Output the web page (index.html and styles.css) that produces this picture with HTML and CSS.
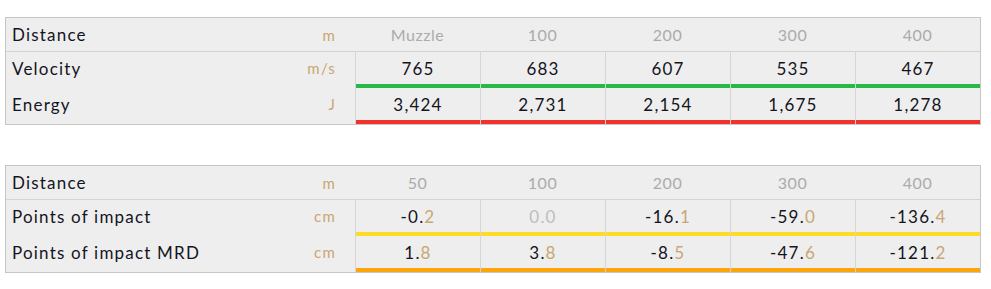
FILE: index.html
```html
<!DOCTYPE html>
<html lang="en">
<head>
<meta charset="utf-8">
<title>Ballistics</title>
<link rel="stylesheet" href="styles.css">
</head>
<body>
<div class="page">
  <table class="ballistics">
    <colgroup><col class="c-label"><col class="c-unit"><col class="c-val"><col class="c-val"><col class="c-val"><col class="c-val"><col class="c-val"></colgroup>
    <tr class="head">
      <th class="label">Distance</th><th class="unit">m</th>
      <td>Muzzle</td><td>100</td><td>200</td><td>300</td><td>400</td>
    </tr>
    <tr class="data green">
      <th class="label">Velocity</th><th class="unit">m/s</th>
      <td>765</td><td>683</td><td>607</td><td>535</td><td>467</td>
    </tr>
    <tr class="data red">
      <th class="label">Energy</th><th class="unit">J</th>
      <td>3,424</td><td>2,731</td><td>2,154</td><td>1,675</td><td>1,278</td>
    </tr>
  </table>

  <table class="ballistics">
    <colgroup><col class="c-label"><col class="c-unit"><col class="c-val"><col class="c-val"><col class="c-val"><col class="c-val"><col class="c-val"></colgroup>
    <tr class="head">
      <th class="label">Distance</th><th class="unit">m</th>
      <td>50</td><td>100</td><td>200</td><td>300</td><td>400</td>
    </tr>
    <tr class="data yellow">
      <th class="label">Points of impact</th><th class="unit">cm</th>
      <td>-0.<span class="dec">2</span></td><td class="zero">0.0</td><td>-16.<span class="dec">1</span></td><td>-59.<span class="dec">0</span></td><td>-136.<span class="dec">4</span></td>
    </tr>
    <tr class="data orange">
      <th class="label">Points of impact MRD</th><th class="unit">cm</th>
      <td>1.<span class="dec">8</span></td><td>3.<span class="dec">8</span></td><td>-8.<span class="dec">5</span></td><td>-47.<span class="dec">6</span></td><td>-121.<span class="dec">2</span></td>
    </tr>
  </table>
</div>
</body>
</html>
```
FILE: styles.css
```css
html, body {
  margin: 0;
  padding: 0;
  background: #ffffff;
}

.page {
  padding: 17px 0 0 5px;
  display: flex;
  flex-direction: column;
  gap: 40px;
  font-family: "Lato", "Liberation Sans", sans-serif;
  font-size: 17px;
  letter-spacing: 1.2px;
}

.ballistics {
  width: 975px;
  table-layout: fixed;
  border-collapse: separate;
  border-spacing: 0;
  border: 1px solid #c6c6c6;
  background: #eeeeee;
}

.c-label { width: 269px; }
.c-unit { width: 80px; }
.c-val { width: 125px; }

.ballistics th,
.ballistics td {
  padding: 0;
  font-weight: 400;
  white-space: nowrap;
}

.label {
  text-align: left;
  padding-left: 6px !important;
  color: #14141e;
}

.unit {
  text-align: right;
  padding-right: 19px !important;
  color: #c9a673;
  font-size: 15px;
}

.head th,
.head td {
  height: 33px;
  border-bottom: 1px solid #d3d3d3;
}

.head td {
  text-align: center;
  color: #ababab;
  font-size: 16px;
  letter-spacing: 0.5px;
}

.data th {
  height: 32px;
  padding-bottom: 4px;
}

.data td {
  height: 32px;
  padding-bottom: 4px;
  text-align: center;
  color: #14141e;
  border-left: 1px solid #d6d6d6;
}

.green td { box-shadow: inset 0 -4px 0 #27b845; }
.red td { box-shadow: inset 0 -4px 0 #f3312c; }
.yellow td { box-shadow: inset 0 -4px 0 #fedb24; }
.orange td { box-shadow: inset 0 -4px 0 #fca60b; }

.dec { color: #c9a673; }
.zero { color: #bdbdbd !important; }
```
